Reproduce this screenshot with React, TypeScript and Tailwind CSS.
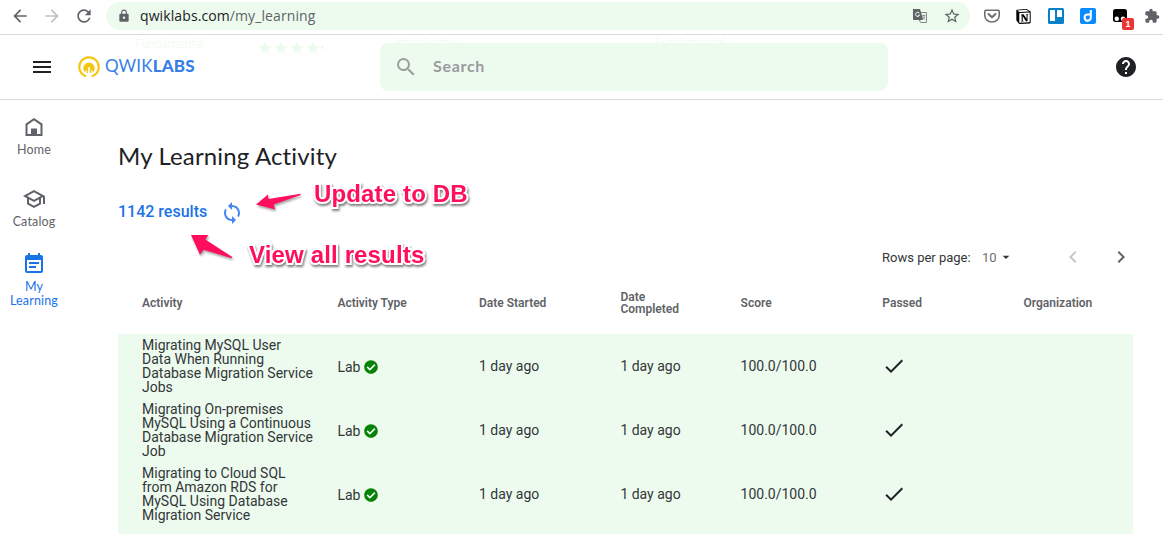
import React from "react";
import {
  MdArrowBack, MdArrowForward, MdRefresh, MdLock, MdStarBorder, MdStar, MdExtension,
  MdSearch, MdHelp, MdMenu, MdOutlineSchool, MdEventNote, MdSync, MdArrowDropDown,
  MdChevronLeft, MdChevronRight, MdCheck,
} from "react-icons/md";
import { FaCheckCircle } from "react-icons/fa";
import { SiNotion } from "react-icons/si";

const labs = [
  ["Migrating MySQL User", "Data When Running", "Database Migration Service", "Jobs"],
  ["Migrating On-premises", "MySQL Using a Continuous", "Database Migration Service", "Job"],
  ["Migrating to Cloud SQL", "from Amazon RDS for", "MySQL Using Database", "Migration Service"],
];

const columns = "grid grid-cols-[195.4px_141.6px_141.4px_120.2px_141.8px_141.2px_133.4px]";

function BrowserBar() {
  return (
    <div className="flex h-[35px] w-full items-start border-b border-[#d9dadd] bg-white">
      <div className="flex h-8 w-[106px] shrink-0 items-center pl-[10px] text-[#5f6368]">
        <MdArrowBack className="size-5" />
        <MdArrowForward className="ml-3 size-5 text-[#bdc1c6]" />
        <MdRefresh className="ml-3 size-5" />
      </div>
      <div className="mt-[2px] flex h-7 w-[864px] shrink-0 items-center rounded-full bg-[#edfbef] pl-[11px] pr-[9px]">
        <MdLock className="size-[14px] text-[#5f6368]" />
        <span className="ml-[9px] whitespace-nowrap font-['Open_Sans',sans-serif] text-[14px] leading-5 tracking-[0.1px] text-[#202124]">
          qwiklabs.com<span className="text-[#5f6368]">/my_learning</span>
        </span>
        <svg className="ml-auto size-4" viewBox="0 0 16 16">
          <path d="M7 4.5h7.5v10H8.5L7 11" fill="none" stroke="#85888c" />
          <path d="M1 1h7l3.2 11H2a1 1 0 0 1-1-1Z" fill="#5f6368" />
          <path d="M7.4 5.2a2.1 2.1 0 1 0 .2 2H5.8" fill="none" stroke="#edfbef" />
          <path d="M9.5 7.5h4M11.5 6.5v1M13 7.8c-.4 1.5-1.3 2.7-2.6 3.7M10.4 8c.6 1.5 1.6 2.6 3 3.5" fill="none" stroke="#85888c" strokeWidth=".8" />
        </svg>
        <MdStarBorder className="ml-[15px] size-[18px] text-[#5f6368]" />
      </div>
      <div className="flex h-8 items-center gap-4 pl-[14px]">
        <svg className="size-4" viewBox="0 0 16 16" fill="none" stroke="#706d70" strokeWidth="1.6">
          <path d="M2 2.2h12q1.2 0 1.2 1.2v4a7.2 6.6 0 0 1-14.4 0v-4q0-1.2 1.2-1.2Z" />
          <path d="m4.5 6 3.5 3.3L11.5 6" strokeWidth="2" strokeLinecap="round" />
        </svg>
        <SiNotion className="size-[15px] text-black" />
        <svg className="ml-px size-4" viewBox="0 0 16 16">
          <rect width="16" height="16" rx="1.5" fill="#0782ca" />
          <rect x="2" y="2" width="5" height="11" rx=".6" fill="white" />
          <rect x="9" y="2" width="5" height="7" rx=".6" fill="white" />
        </svg>
        <svg className="size-4" viewBox="0 0 16 16">
          <rect width="16" height="16" rx="2" fill="#078bff" />
          <path d="M10.8 2v7.6a3.1 3.1 0 1 1-3.1-3.1h3.1" fill="none" stroke="white" strokeWidth="2" />
          <path d="M5.5 13.2h3" stroke="white" />
        </svg>
        <div className="relative size-4">
          <svg className="size-4" viewBox="0 0 16 16">
            <rect x="1" y="1" width="14" height="13" rx="2.5" fill="#050505" />
            <circle cx="4.8" cy="10.8" r="2.2" fill="white" />
            <circle cx="11" cy="10.8" r="2.2" fill="white" />
          </svg>
          <span className="absolute left-[10px] top-[10px] flex h-3 w-3 items-center justify-center rounded-[2px] bg-[#ee3338] font-['Liberation_Sans',sans-serif] text-[9px] font-bold leading-3 text-white">1</span>
        </div>
        <MdExtension className="size-4 text-[#5f6368]" />
      </div>
    </div>
  );
}

function Header() {
  return (
    <header className="relative flex h-[65px] items-start border-b border-[#dadce0] bg-white">
      <div className="absolute left-[135px] top-[1px] font-['Roboto',sans-serif] text-[12px] font-light leading-4 text-[#edfbef]">Fundamental</div>
      <div className="absolute left-[257px] top-[5px] flex text-[#edfbef]">
        <MdStar className="size-4" /><MdStar className="size-4" /><MdStar className="size-4" /><MdStar className="size-4" />
        <span className="mt-[6px] size-[3px] bg-[#edfbef]" />
      </div>
      <div className="absolute left-[395px] top-0 font-['Roboto',sans-serif] text-[12px] font-light leading-4 text-[#edfbef]">Introductory</div>
      <div className="absolute left-[655px] top-0 font-['Roboto',sans-serif] text-[12px] font-light leading-4 text-[#edfbef]">Fundamental</div>
      <MdMenu className="ml-[30px] mt-5 size-6 text-[#202124]" />
      <div className="ml-6 mt-5 flex h-6 w-[118px] items-center">
        <svg className="size-[22px] shrink-0" viewBox="0 0 22 22" fill="none" stroke="#f4c60d">
          <path d="M8.2 20.3a9.7 9.7 0 1 1 5.6 0" strokeWidth="2.2" />
          <path d="M6.9 15.6a5.3 5.3 0 1 1 8.2 0l-2.3-2.3v-2.2H9.2v2.2Z" fill="#f4c60d" strokeWidth=".8" />
          <path d="M11 11v10.5" stroke="white" strokeWidth="1.6" />
          <path d="M9.5 10.5V17M12.5 10.5V17" strokeWidth="1.3" />
        </svg>
        <span className="ml-[5px] mt-[-2px] whitespace-nowrap font-['Lato',sans-serif] text-[17px] leading-6 tracking-[0.15px] text-[#387fe5]">QWIK<b className="font-black">LABS</b></span>
      </div>
      <div className="relative ml-[184px] mt-2 flex h-12 w-[508px] shrink-0 items-center rounded-lg bg-[#edfbef] pl-[14px]">
        <MdSearch className="size-6 text-[#9a9c9e]" />
        <span className="ml-[15px] mt-[-2px] font-['Lato',sans-serif] text-[16px] font-bold tracking-[0.7px] text-[#9a9a9f]">Search</span>
      </div>
      <MdHelp className="ml-[226px] mt-5 size-6 text-[#202124]" />
    </header>
  );
}

function Sidebar() {
  return (
    <nav className="flex w-[68px] shrink-0 flex-col items-center font-['Lato',sans-serif] text-[12.5px] leading-[14px] tracking-[0.15px] text-[#5f6368]">
      <div className="mt-[15px] flex h-[72px] flex-col items-center">
        <svg className="size-6" viewBox="0 0 24 24">
          <path d="M4.5 9.3 12 4.2l7.5 5.1V20h-15Z" fill="none" stroke="currentColor" strokeWidth="2" />
          <path d="M9 13.5h6V20H9z" fill="currentColor" />
        </svg>
        <span className="mt-1">Home</span>
      </div>
      <div className="flex h-[65px] flex-col items-center">
        <MdOutlineSchool className="size-6" />
        <span className="mt-1">Catalog</span>
      </div>
      <div className="flex flex-col items-center text-center text-[#1a73e8]">
        <MdEventNote className="size-6" />
        <span className="mt-1">My<br />Learning</span>
      </div>
    </nav>
  );
}

function Annotation({ children }: { children: React.ReactNode }) {
  return (
    <span className="whitespace-nowrap font-['Liberation_Sans',sans-serif] text-[24px] font-bold leading-7 tracking-[0.15px] text-[#ff0f5b] [paint-order:stroke_fill] [-webkit-text-stroke:4px_white] [filter:drop-shadow(1px_2px_1px_rgba(0,0,0,0.5))]">
      {children}
    </span>
  );
}

function ActivityTable() {
  return (
    <div className="w-[1015px]">
      <div className={`${columns} h-[63px] items-center text-[12px] font-semibold leading-3 text-[#5f6368]`}>
        <span className="pl-6">Activity</span>
        <span className="pl-6">Activity Type</span>
        <span className="pl-6">Date Started</span>
        <span className="pl-6">Date<br />Completed</span>
        <span className="pl-6">Score</span>
        <span className="pl-6">Passed</span>
        <span className="pl-6">Organization</span>
      </div>
      <div className="h-[200px] bg-[#edfbef] text-[14px] leading-[14px] text-[#333638]">
        {labs.map((lines) => (
          <div key={lines[0]} className={`${columns} h-16 items-center`}>
            <div className="whitespace-nowrap pl-6">
              {lines.map((line) => <div key={line}>{line}</div>)}
            </div>
            <div className="flex items-center gap-1 pl-6 pt-[2px]">Lab <FaCheckCircle className="size-[14px] text-[#078207]" /></div>
            <div className="pl-6">1 day ago</div>
            <div className="pl-6">1 day ago</div>
            <div className="pl-6">100.0/100.0</div>
            <div className="pl-6"><MdCheck className="size-6 text-[#202124]" /></div>
            <div />
          </div>
        ))}
      </div>
    </div>
  );
}

export default function App() {
  return (
    <div className="h-[534px] w-[1163px] overflow-hidden bg-white font-['Roboto',sans-serif]">
      <BrowserBar />
      <Header />
      <div className="flex h-[434px]">
        <Sidebar />
        <main className="relative ml-[50px] w-[1015px]">
          <h1 className="h-24 pt-10 font-['Lato',sans-serif] text-[24px] leading-8 tracking-[0.15px] text-[#202124]">My Learning Activity</h1>
          <div className="flex h-8 items-center text-[16px] font-medium text-[#1a73e8]">
            1142 results <MdSync className="ml-[13px] mt-[2px] size-6 text-[#4285f4]" />
          </div>
          <div className="flex h-[43px] items-end text-[13px] text-[#333638]">
            <div className="flex h-7 w-full items-center pl-[764px]">
              <span className="w-[100px] whitespace-nowrap pt-px">Rows per page:</span>
              <span className="w-4 pt-px text-[#6b6f73]">10</span>
              <MdArrowDropDown className="size-4" />
              <MdChevronLeft className="ml-[47px] size-6 text-[#cbc5ca]" />
              <MdChevronRight className="ml-6 size-6 text-[#5f6368]" />
            </div>
          </div>
          <ActivityTable />
          <div className="absolute left-[196px] top-20"><Annotation>Update to DB</Annotation></div>
          <div className="absolute left-[131px] top-[141px]"><Annotation>View all results</Annotation></div>
          <svg className="absolute left-[64px] top-[88px] h-[78px] w-[126px] drop-shadow-[1px_2px_1px_rgba(0,0,0,0.35)]" viewBox="182 188 126 78" fill="#ff0f5b">
            <path d="m256 204.5 12-10 .5 4.5 32-5.2.2 1.2-27 9.5 1.5 5Z" />
            <path d="m191 235 17.5 0-3.2 4.5 27 17.5-.7 1.2-28-8.5-3.6 5Z" />
          </svg>
        </main>
      </div>
    </div>
  );
}
